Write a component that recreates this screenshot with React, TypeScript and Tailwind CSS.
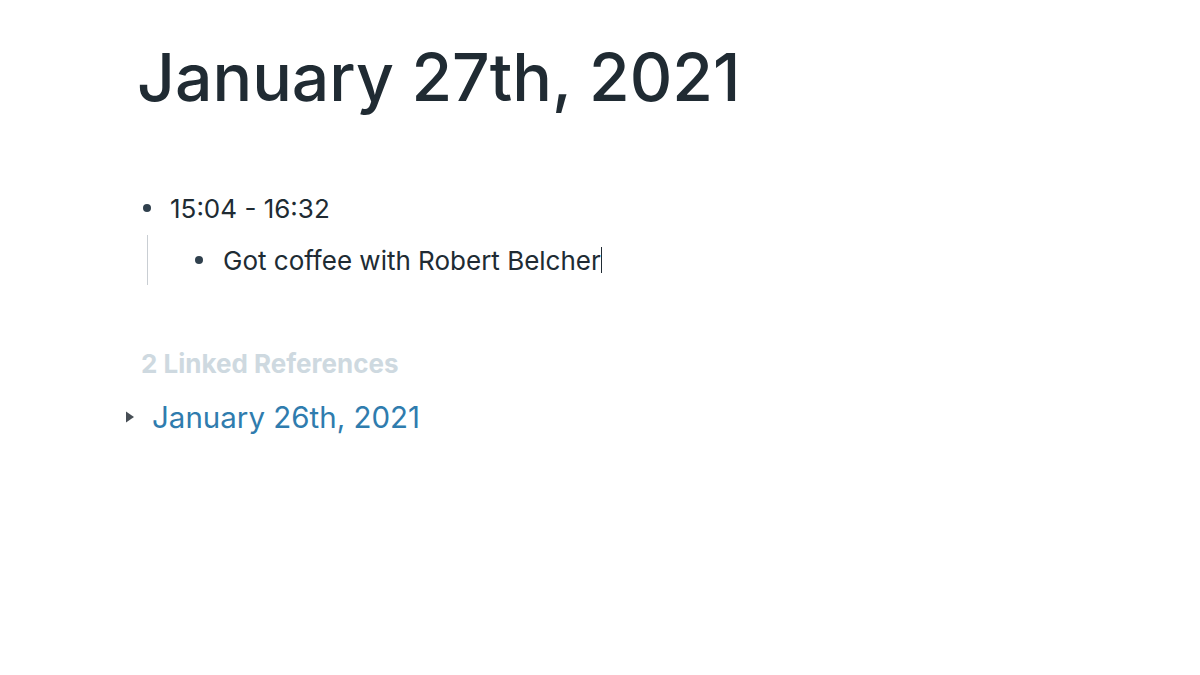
const App = () => {
  return (
    <div className="w-[1200px] h-[675px] bg-white font-['Inter',sans-serif] text-[#202b33]">
      <div className="pl-[137px] pt-[39px]">
        <h1 className="text-[66px] font-medium leading-[76px]">January 27th, 2021</h1>
        <div className="mt-[75px]">
          <div className="flex items-center h-[36px]">
            <span className="w-[8px] h-[8px] rounded-full bg-[#30404d] ml-[6px] mr-[19px]" />
            <span className="text-[26px]">15:04 - 16:32</span>
          </div>
          <div className="ml-[10px] border-l border-[#c9ced3] mt-[9px] h-[50px] flex items-center">
            <span className="w-[8px] h-[8px] rounded-full bg-[#30404d] ml-[47px] mr-[20px]" />
            <span className="text-[26px]">Got coffee with Robert Belcher</span>
            <span className="w-px h-[26px] bg-[#202b33]" />
          </div>
        </div>
        <div className="mt-[63px] pl-[4px] text-[26px] leading-[32px] font-bold text-[#ced9e0]">2 Linked References</div>
        <div className="-ml-[12px] mt-[19px] flex items-center h-[36px]">
          <svg width="10" height="14" viewBox="0 0 10 14" className="mr-[17px]">
            <path d="M1 1.5 L9 7 L1 12.5 Z" fill="#474e55" />
          </svg>
          <span className="text-[29.5px] text-[#2f7cae]">January 26th, 2021</span>
        </div>
      </div>
    </div>
  )
}

export default App
